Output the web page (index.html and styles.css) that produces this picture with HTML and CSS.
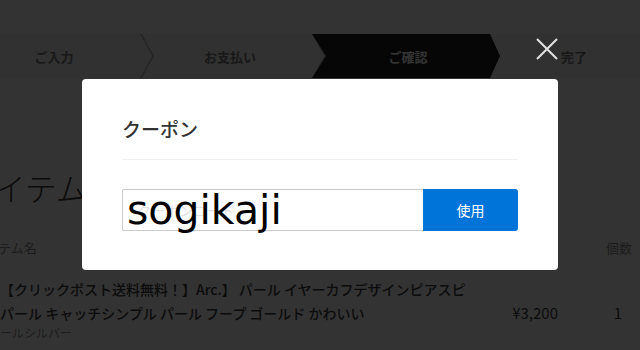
FILE: index.html
```html
<!DOCTYPE html>
<html lang="ja">
  <head>
    <meta charset="UTF-8" />
    <meta name="viewport" content="width=device-width, initial-scale=1.0" />
    <title>ご確認</title>
    <link rel="stylesheet" href="styles.css">
  </head>
  <body>
    <div class="page">
      <div class="topbar"></div>

      <div class="steps">
        <div class="step">ご入力</div>
        <div class="step">お支払い</div>
        <div class="step active">ご確認</div>
        <div class="step last">完了</div>
      </div>

      <div class="cart">
        <h2 class="cart-title">アイテム</h2>
        <div class="cart-head">
          <span class="col-name">アイテム名</span>
          <span class="col-price">価格</span>
          <span class="col-qty">個数</span>
        </div>
        <div class="cart-row">
          <div class="col-name">
            <p class="item-name">【クリックポスト送料無料！】Arc.】 パール イヤーカフデザインピアスピ</p>
            <p class="item-name">パール キャッチシンプル パール フープ ゴールド かわいい</p>
            <p class="item-option">パールシルバー</p>
          </div>
          <div class="col-price">¥3,200</div>
          <div class="col-qty">1</div>
        </div>
      </div>
    </div>

    <div class="overlay">
      <div class="modal">
        <button class="close" type="button" aria-label="閉じる">
          <svg width="22" height="22" viewBox="0 0 22 22">
            <path d="M1 1 L21 21 M21 1 L1 21" stroke="#e2e2e2" stroke-width="2" fill="none" />
          </svg>
        </button>
        <h3 class="modal-title">クーポン</h3>
        <div class="coupon-form">
          <div class="coupon-input">
            <span class="placeholder">クーポンコード</span>
            <span class="value">sogikaji</span>
          </div>
          <button class="coupon-btn" type="button">使用</button>
        </div>
      </div>
    </div>
  </body>
</html>
```

FILE: styles.css
```css
body {
  font-family: "Noto Sans CJK JP", "Noto Sans", sans-serif;
  background: #ffffff;
  margin: 0;
  overflow: hidden;
}

.page {
  width: 640px;
}

.topbar {
  height: 34px;
}

.steps {
  display: flex;
  height: 44px;
  margin-left: -32px;
  background: #f2f2f2;
}

.step {
  position: relative;
  flex: 0 0 172px;
  display: flex;
  align-items: center;
  justify-content: center;
  font-size: 13px;
  font-weight: bold;
  color: #7a7a7a;
}

.step::after {
  content: "";
  position: absolute;
  top: 0;
  right: -14px;
  width: 14px;
  height: 100%;
  background: #bcbcbc;
  clip-path: polygon(0 0, 2px 0, 14px 50%, 2px 100%, 0 100%, 12px 50%);
}

.step:nth-child(2) {
  padding-left: 8px;
  box-sizing: border-box;
}

.step.active {
  flex-basis: 188px;
  background: #1e1e1e;
  color: #ffffff;
  padding-left: 4px;
  box-sizing: border-box;
  clip-path: polygon(0 0, 178px 0, 188px 50%, 178px 100%, 0 100%, 14px 50%);
}

.step.active::after,
.step.last::after {
  display: none;
}

.step.last {
  margin-left: -12px;
}

.cart {
  color: #3e3e3e;
}

.cart-title {
  margin: 89px 0 0 -37px;
  font-size: 32px;
  font-weight: 300;
  line-height: 40px;
}

.cart-head,
.cart-row {
  display: grid;
  grid-template-columns: 470px 88px 82px;
}

.cart-head {
  margin-top: 31px;
  font-size: 13px;
  line-height: 20px;
  color: #8e8e8e;
}

.cart-head .col-name {
  margin-left: -27px;
}

.cart-row {
  margin-top: 19px;
  font-size: 14px;
  font-weight: 500;
  line-height: 24px;
}

.item-name {
  margin: 0;
  white-space: nowrap;
}

.item-option {
  margin: 0 0 0 -12px;
  font-size: 12px;
  font-weight: normal;
  line-height: 16px;
  color: #8e8e8e;
}

.col-price {
  text-align: right;
}

.cart-row .col-price {
  font-size: 15px;
  font-weight: normal;
}

.cart-row .col-price,
.cart-row .col-qty {
  padding-top: 24px;
}

.col-qty {
  text-align: right;
  padding-right: 8px;
}

.cart-row .col-qty {
  padding-right: 18px;
  font-size: 15px;
  font-weight: normal;
}

.overlay {
  position: fixed;
  inset: 0;
  background: rgba(0, 0, 0, 0.8);
  display: flex;
  justify-content: center;
  align-items: flex-start;
  padding-top: 79px;
}

.modal {
  position: relative;
  width: 476px;
  box-sizing: border-box;
  padding: 36px 40px 39px;
  background: #ffffff;
  border-radius: 4px;
}

.close {
  position: absolute;
  top: -41px;
  right: 0;
  width: 22px;
  height: 22px;
  padding: 0;
  border: none;
  background: none;
}

.close svg {
  display: block;
}

.modal-title {
  margin: 0;
  padding-bottom: 16px;
  border-bottom: 1px solid #eeeeee;
  font-size: 19px;
  font-weight: 500;
  line-height: 28px;
  color: #333333;
}

.coupon-form {
  display: flex;
  margin-top: 29px;
  height: 42px;
}

.coupon-input {
  position: relative;
  flex: 0 0 301px;
  box-sizing: border-box;
  border: 1px solid #cccccc;
  border-right: none;
  border-radius: 2px 0 0 2px;
  padding-left: 4px;
}

.placeholder {
  position: absolute;
  left: 14px;
  top: 10px;
  font-size: 14px;
  line-height: 20px;
  color: #e2e2e2;
}

.value {
  position: relative;
  font-family: "DejaVu Sans", sans-serif;
  font-size: 41px;
  line-height: 40px;
  color: #000000;
}

.coupon-btn {
  flex: 1;
  border: none;
  border-radius: 0 3px 3px 0;
  background: #0074d9;
  color: #ffffff;
  font-family: "Noto Sans CJK JP", sans-serif;
  font-size: 14px;
}
```
